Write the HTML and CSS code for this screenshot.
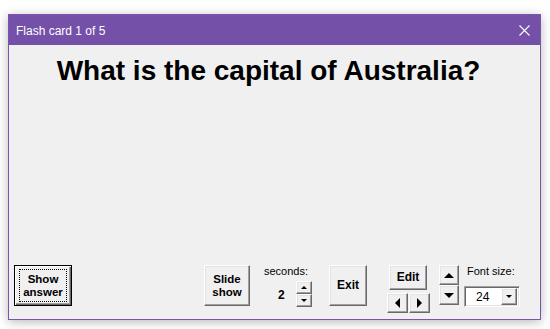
FILE: index.html
```html
<!DOCTYPE html>
<html lang="en">
<head>
<meta charset="utf-8">
<title>Flash card 1 of 5</title>
<link rel="stylesheet" href="styles.css">
</head>
<body>
<div class="window">
  <div class="titlebar">
    <span class="title">Flash card 1 of 5</span>
    <svg class="close" width="11" height="11" viewBox="0 0 11 11"><path d="M0.5 0.5L10.5 10.5M10.5 0.5L0.5 10.5" stroke="#ffffff" stroke-width="1.1" fill="none"/></svg>
  </div>
  <div class="content">
    <div class="question">What is the capital of Australia?</div>
    <div class="controls">
      <button class="btn default show">Show<br>answer</button>
      <button class="btn slide">Slide<br>show</button>
      <div class="seconds">
        <div class="lbl">seconds:</div>
        <div class="spinrow">
          <span class="val">2</span>
          <div class="spin">
            <button class="btn sbtn"><i class="tri up small"></i></button>
            <button class="btn sbtn"><i class="tri down small"></i></button>
          </div>
        </div>
      </div>
      <button class="btn exit">Exit</button>
      <div class="editgroup">
        <button class="btn edit">Edit</button>
        <div class="lr">
          <button class="btn lrbtn"><i class="tri left"></i></button>
          <button class="btn lrbtn"><i class="tri right"></i></button>
        </div>
      </div>
      <div class="updown">
        <button class="btn udbtn"><i class="tri up"></i></button>
        <button class="btn udbtn"><i class="tri down"></i></button>
      </div>
      <div class="fontgroup">
        <div class="lbl flbl">Font size:</div>
        <div class="combo">
          <span class="cval">24</span>
          <span class="btn drop"><i class="tri down small"></i></span>
        </div>
      </div>
    </div>
  </div>
</div>
</body>
</html>
```
FILE: styles.css
```css
html, body {
  margin: 0;
  background: #ffffff;
}
body {
  padding: 14px 0 0 8px;
  height: 329px;
  box-sizing: border-box;
  overflow: hidden;
  font-family: "Liberation Sans", Arial, sans-serif;
}
.window {
  width: 533px;
  height: 306px;
  box-sizing: border-box;
  border: 1px solid #7a56ab;
  display: flex;
  flex-direction: column;
  box-shadow: 0 2px 10px rgba(0, 0, 0, 0.28);
}
.titlebar {
  height: 30px;
  flex: none;
  background: #7450a8;
  display: flex;
  align-items: center;
  padding: 0 10px 0 7px;
}
.title {
  color: #ffffff;
  font-size: 12px;
  flex: 1;
  padding-top: 1px;
}
.close {
  display: block;
}
.content {
  flex: 1;
  background: #f0f0f0;
  display: flex;
  flex-direction: column;
  padding-bottom: 6px;
}
.question {
  margin-top: 9px;
  font-size: 28px;
  line-height: 34px;
  font-weight: bold;
  text-align: center;
  color: #000;
  padding-right: 12px;
}
.controls {
  margin-top: auto;
  display: flex;
  align-items: flex-start;
  height: 48px;
  font-size: 11px;
  color: #000;
}
.btn {
  box-sizing: border-box;
  margin: 0;
  padding: 0;
  font-family: inherit;
  font-size: 11px;
  font-weight: bold;
  color: #000;
  background: #f0f0f0;
  border: 1px solid;
  border-color: #ffffff #696969 #696969 #ffffff;
  box-shadow: inset -1px -1px #a0a0a0, inset 1px 1px #e3e3e3;
  display: flex;
  align-items: center;
  justify-content: center;
  text-align: center;
  line-height: 13px;
}
.show {
  position: relative;
  margin-left: 5px;
  width: 58px;
  height: 41px;
  font-size: 11.5px;
  line-height: 13px;
  border: 1px solid #000;
  box-shadow: inset 1px 1px #ffffff, inset -1px -1px #696969, inset -2px -2px #a0a0a0;
}
.show::after {
  content: "";
  position: absolute;
  left: 4px;
  top: 3px;
  right: 4px;
  bottom: 3px;
  border: 1px dotted #000;
}
.slide {
  margin-left: 132px;
  width: 46px;
  height: 41px;
  font-size: 11.5px;
}
.seconds {
  margin-left: 14px;
  width: 48px;
}
.lbl {
  font-size: 11px;
  line-height: 13px;
  height: 16px;
}
.spinrow {
  display: flex;
  align-items: center;
}
.val {
  font-weight: bold;
  font-size: 12px;
  margin-left: 14px;
  width: 18px;
  padding-top: 2px;
}
.spin {
  display: flex;
  flex-direction: column;
}
.sbtn {
  width: 16px;
  height: 13px;
}
.exit {
  margin-left: 17px;
  width: 38px;
  height: 41px;
  font-size: 12px;
}
.editgroup {
  margin-left: 20px;
  width: 44px;
  display: flex;
  flex-direction: column;
}
.edit {
  margin-left: 2px;
  width: 38px;
  height: 25px;
  font-size: 12px;
}
.lr {
  margin-top: 3px;
  display: flex;
}
.lrbtn {
  width: 21px;
  height: 20px;
}
.lrbtn + .lrbtn {
  margin-left: 1px;
}
.updown {
  margin-left: 8px;
  display: flex;
  flex-direction: column;
}
.udbtn {
  width: 20px;
  height: 20px;
}
.fontgroup {
  margin-left: 5px;
  width: 56px;
}
.flbl {
  padding-left: 3px;
  height: 21px;
}
.combo {
  box-sizing: border-box;
  width: 56px;
  height: 21px;
  background: #ffffff;
  border: 1px solid;
  border-color: #a0a0a0 #ffffff #ffffff #a0a0a0;
  box-shadow: inset 1px 1px #696969, inset -1px -1px #e3e3e3;
  display: flex;
  align-items: center;
  padding: 2px 2px 2px 11px;
}
.cval {
  flex: 1;
  font-size: 12px;
}
.drop {
  width: 16px;
  height: 17px;
}
.tri {
  display: block;
  width: 0;
  height: 0;
  border-style: solid;
  border-color: transparent;
}
.tri.up {
  border-width: 0 5px 5px 5px;
  border-bottom-color: #000;
}
.tri.down {
  border-width: 5px 5px 0 5px;
  border-top-color: #000;
}
.tri.up.small {
  border-width: 0 3px 3px 3px;
  border-bottom-color: #000;
}
.tri.down.small {
  border-width: 3px 3px 0 3px;
  border-top-color: #000;
}
.tri.left {
  border-width: 5px 5px 5px 0;
  border-right-color: #000;
}
.tri.right {
  border-width: 5px 0 5px 5px;
  border-left-color: #000;
}
```
